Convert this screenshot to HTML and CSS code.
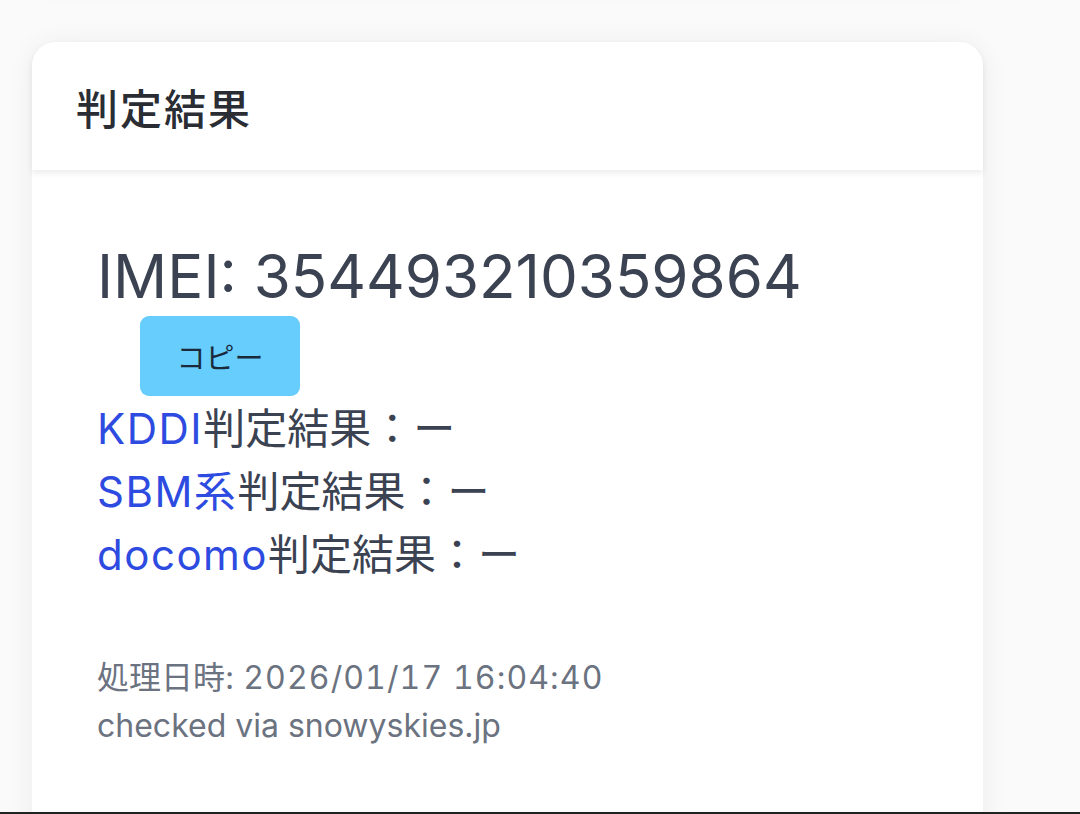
FILE: index.html
```html
<!DOCTYPE html>
<html lang="ja">
<head>
<meta charset="utf-8">
<link rel="stylesheet" href="styles.css">
</head>
<body>
<div class="page">
  <div class="prev-card"></div>
  <section class="card">
    <header class="card-header">
      <h2 class="card-title">判定結果</h2>
    </header>
    <div class="card-body">
      <div class="imei">IMEI: 354493210359864</div>
      <button class="copy-btn">コピー</button>
      <ul class="results">
        <li><span class="carrier">KDDI</span>判定結果：ー</li>
        <li><span class="carrier">SBM系</span>判定結果：ー</li>
        <li><span class="carrier">docomo</span>判定結果：ー</li>
      </ul>
      <div class="meta">
        <p>処理日時: <span class="date">2026/01/17 16:04:40</span></p>
        <p>checked via snowyskies.jp</p>
      </div>
    </div>
  </section>
</div>
<div class="bottom-bar"></div>
</body>
</html>
```
FILE: styles.css
```css
html, body {
  margin: 0;
  padding: 0;
  height: 100%;
  overflow: hidden;
}
body {
  background: #fafafa;
  font-family: Inter, "Noto Sans CJK JP", sans-serif;
  color: #374151;
}
.page {
  width: 951px;
  margin-left: 32px;
}
.prev-card {
  height: 40px;
  margin-top: -60px;
  background: #fafafa;
  box-shadow: 0 0 30px rgba(0, 0, 0, 0.07);
  border-radius: 24px;
}
.card {
  margin-top: 62px;
  background: #ffffff;
  border-radius: 24px;
  box-shadow: 0 2px 28px rgba(0, 0, 0, 0.06);
  height: 900px;
}
.card-header {
  height: 128px;
  display: flex;
  align-items: center;
  padding-left: 44px;
  border-radius: 24px 24px 0 0;
  background: #ffffff;
  box-shadow: 0 3px 6px rgba(0, 0, 0, 0.08);
  position: relative;
}
.card-title {
  margin: 0;
  font-family: "Noto Sans CJK JP", sans-serif;
  font-size: 42px;
  font-weight: 500;
  color: #2a2d33;
  letter-spacing: 2px;
}
.card-body {
  padding: 70px 0 0 65px;
}
.imei {
  font-size: 60px;
  line-height: 72px;
  font-weight: 400;
  color: #3b4251;
}
.copy-btn {
  display: block;
  margin: 4px 0 1px 43px;
  width: 160px;
  height: 80px;
  border: none;
  border-radius: 9px;
  background: #66cdfd;
  font-family: "Noto Sans CJK JP", sans-serif;
  font-size: 29px;
  color: #1a2a3c;
  padding: 0;
}
.results {
  list-style: none;
  margin: 0;
  padding: 0;
  font-size: 42px;
  line-height: 63px;
  color: #3b4251;
}
.carrier {
  color: #2d4be0;
  letter-spacing: 1.5px;
}
.meta {
  margin-top: 68px;
  font-size: 32px;
  line-height: 48px;
  color: #6b7280;
}
.meta p {
  margin: 0;
}
.date {
  font-variant-numeric: tabular-nums;
  letter-spacing: 1.1px;
}
.bottom-bar {
  position: fixed;
  left: 0;
  right: 0;
  bottom: 0;
  height: 2px;
  background: #222222;
}
```
